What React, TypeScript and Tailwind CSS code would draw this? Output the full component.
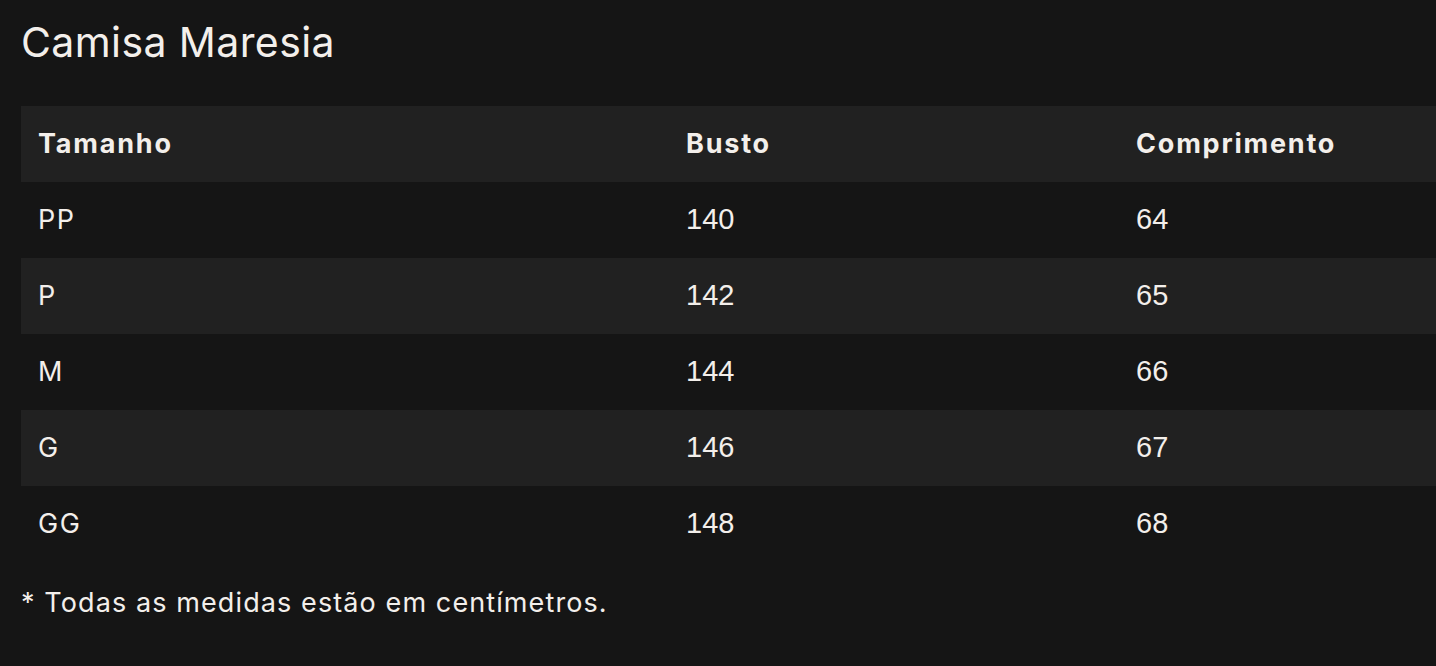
const rows = [
  { size: "PP", bust: "140", length: "64" },
  { size: "P", bust: "142", length: "65" },
  { size: "M", bust: "144", length: "66" },
  { size: "G", bust: "146", length: "67" },
  { size: "GG", bust: "148", length: "68" },
];

const App = () => {
  return (
    <div className="min-h-screen w-full overflow-hidden bg-[#151515] pl-[21px] pt-[17px] text-[#f3efeb] [font-family:Inter,'Noto_Sans',sans-serif]">
      <h1 className="text-[41px] font-normal leading-[50px] tracking-[0.4px]">Camisa Maresia</h1>

      <table className="mt-[39px] w-[1560px] border-collapse text-left">
        <thead>
          <tr className="h-[76px] bg-[#212121]">
            <th className="w-[648px] pl-[17px] text-[27px] font-bold tracking-[1.8px]">Tamanho</th>
            <th className="w-[450px] pl-[17px] text-[27px] font-bold tracking-[1.8px]">Busto</th>
            <th className="pl-[17px] text-[27px] font-bold tracking-[1.8px]">Comprimento</th>
          </tr>
        </thead>
        <tbody>
          {rows.map((row, i) => (
            <tr key={row.size} className={i % 2 === 1 ? "h-[76px] bg-[#212121]" : "h-[76px] bg-[#151515]"}>
              <td className="pl-[17px] text-[27px] tracking-[1.5px]">{row.size}</td>
              <td className="pl-[17px] text-[29px] [font-family:'Liberation_Sans',Arial,sans-serif]">{row.bust}</td>
              <td className="pl-[17px] text-[29px] [font-family:'Liberation_Sans',Arial,sans-serif]">{row.length}</td>
            </tr>
          ))}
        </tbody>
      </table>

      <p className="mt-[24px] text-[27px] leading-[34px] tracking-[1.1px]">* Todas as medidas estão em centímetros.</p>
    </div>
  );
};

export default App;
